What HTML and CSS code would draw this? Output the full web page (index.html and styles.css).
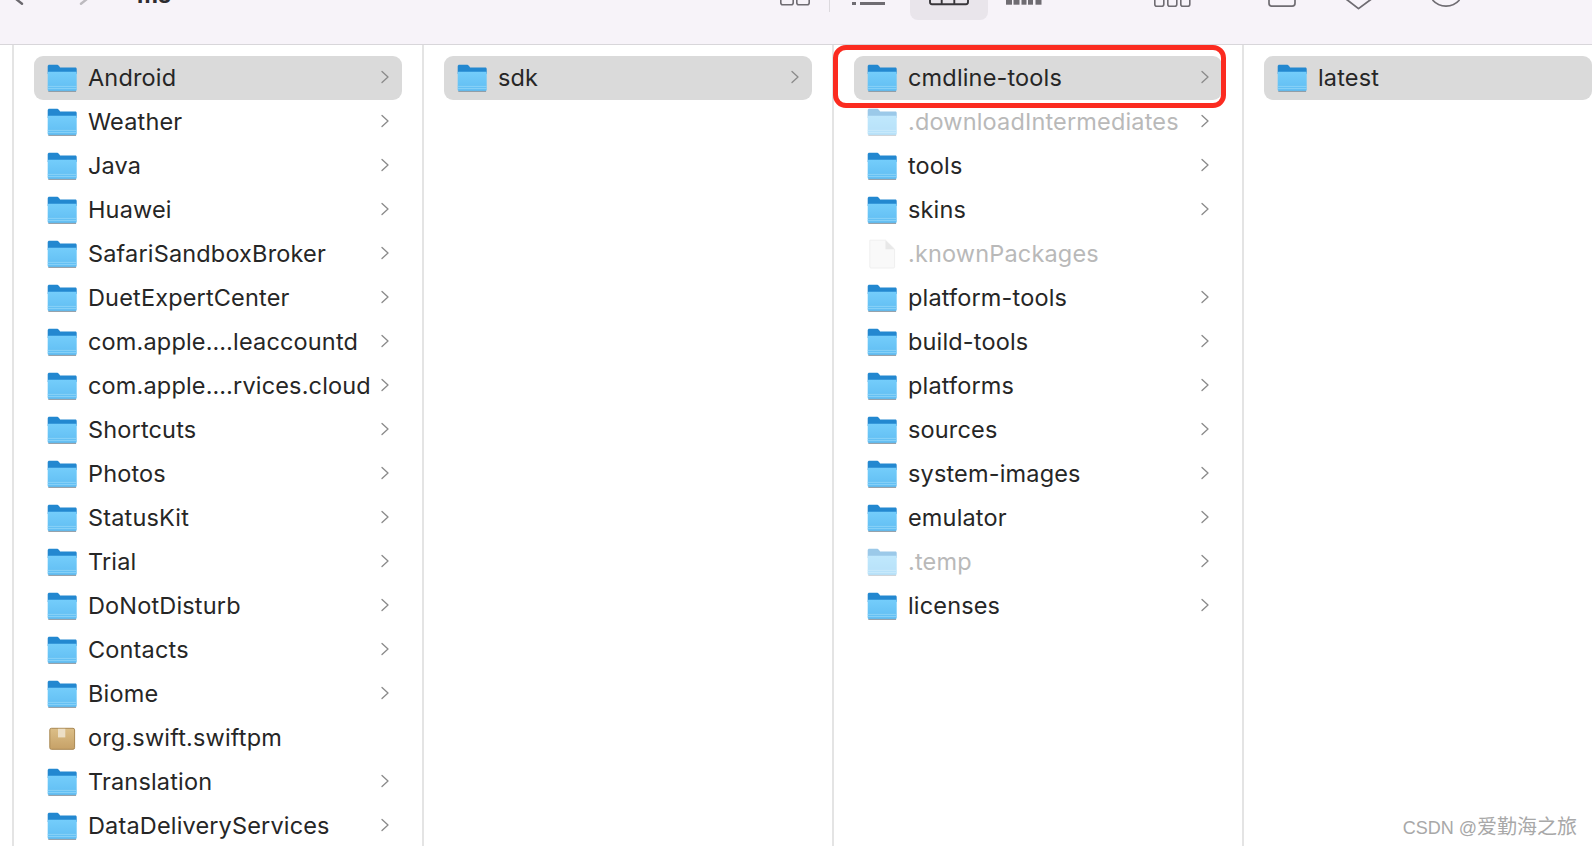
FILE: index.html
```html
<!DOCTYPE html>
<html lang="en">
<head>
<meta charset="utf-8">
<title>Finder</title>
<link rel="stylesheet" href="styles.css">
</head>
<body>
<svg class="defs" width="0" height="0" aria-hidden="true">
  <defs>
    <linearGradient id="fb" x1="0" y1="0" x2="0" y2="1"><stop offset="0" stop-color="#74cdfb"/><stop offset="1" stop-color="#60bdf2"/></linearGradient>
    <linearGradient id="bx" x1="0" y1="0" x2="0" y2="1"><stop offset="0" stop-color="#dcbf88"/><stop offset="1" stop-color="#c6a167"/></linearGradient>
    <symbol id="folder" viewBox="0 0 31 31">
      <path d="M1.7 3.4C1.7 2.4 2.4 1.7 3.4 1.7H10.7C11.7 1.7 12.3 2.1 12.9 2.8L14.1 4.4H29.3C30.3 4.4 30.7 5 30.7 6V11H1.7Z" fill="#2388d0"/>
      <path d="M1.7 10C1.7 9.2 2.3 8.7 3.1 8.7H29.3C30.1 8.7 30.7 9.2 30.7 10V26.6C30.7 27.6 30.1 28.1 29.1 28.1H3.3C2.3 28.1 1.7 27.6 1.7 26.6Z" fill="url(#fb)"/>
      <path d="M1.7 23.4H30.7M1.7 25.6H30.7" stroke="#93d6f8" stroke-width=".8"/>
      <path d="M2.3 28.4H30.1" stroke="#8b98a2" stroke-width="1"/>
    </symbol>
    <symbol id="chev" viewBox="0 0 10 14">
      <path d="M2 1.4L8 7L2 12.6" fill="none" stroke="#8a8a8a" stroke-width="1.3" stroke-linecap="round" stroke-linejoin="round"/>
    </symbol>
    <symbol id="doc" viewBox="0 0 31 31">
      <path d="M3.8 1.2H19.5L28.6 10.2V27.8C28.6 28.5 28.1 29 27.4 29H5C4.3 29 3.8 28.5 3.8 27.8Z" fill="#f9f9f9" stroke="#efefef"/>
      <path d="M19.5 1.2V10.2H28.6Z" fill="#e8e8e8"/>
    </symbol>
    <symbol id="box" viewBox="0 0 31 31">
      <rect x="3.8" y="5.3" width="24.8" height="21" rx="1.6" fill="url(#bx)" stroke="#a98852"/>
      <rect x="12" y="5.8" width="7.3" height="8.6" fill="#ecdfc6"/>
    </symbol>
  </defs>
</svg>
<div class="window">
  <header class="toolbar">
    <svg class="tb nav" width="16" height="8" viewBox="0 0 16 8"><path d="M4 -1L10 3.8" fill="none" stroke="#6b686e" stroke-width="2.4" stroke-linecap="round"/></svg>
    <svg class="tb nav-f" width="16" height="8" viewBox="0 0 16 8"><path d="M10 -1L4 3.8" fill="none" stroke="#bdbabf" stroke-width="2.4" stroke-linecap="round"/></svg>
    <span class="title">ms</span>
    <div class="views">
      <svg class="v1" width="32" height="8" viewBox="0 0 32 8"><g fill="none" stroke="#6f6c72" stroke-width="1.6"><rect x="1.8" y="-8" width="12.4" height="12.8" rx="2"/><rect x="17.8" y="-8" width="12.4" height="12.8" rx="2"/></g></svg>
      <i class="sep"></i>
      <svg class="v2" width="34" height="6" viewBox="0 0 34 6"><path d="M0 3.4H4M8 3.4H33" stroke="#6f6c72" stroke-width="3"/></svg>
      <div class="active"><svg width="40" height="8" viewBox="0 0 40 8"><path d="M1 -4V2C1 3.5 2 4.2 3 4.2H37C38 4.2 39 3.5 39 2V-4M12.7 -4V4M25.3 -4V4" fill="none" stroke="#38363a" stroke-width="1.9"/></svg></div>
      <svg class="v4" width="38" height="8" viewBox="0 0 38 8"><g fill="#6f6c72"><rect x="0" y="0" width="6" height="4.7"/><rect x="7.5" y="0" width="6" height="4.7"/><rect x="15.5" y="0" width="5" height="4.7"/><rect x="22" y="0" width="5" height="4.7"/><rect x="29.5" y="0" width="6" height="4.7"/></g></svg>
    </div>
    <svg class="tb group" width="38" height="10" viewBox="0 0 38 10"><g fill="none" stroke="#6f6c72" stroke-width="1.6"><rect x="1.8" y="-6" width="9" height="12.2" rx="2"/><rect x="14.8" y="-6" width="9" height="12.2" rx="2"/><rect x="27.8" y="-6" width="9" height="12.2" rx="2"/></g></svg>
    <svg class="tb share" width="30" height="10" viewBox="0 0 30 10"><path d="M2 -6V3.2C2 5 3 6.1 4.8 6.1H25.2C27 6.1 28 5 28 3.2V-6" fill="none" stroke="#6f6c72" stroke-width="1.7"/></svg>
    <svg class="tb tag" width="34" height="12" viewBox="0 0 34 12"><path d="M5 -1L17.5 8.6L30.5 -1" fill="none" stroke="#6f6c72" stroke-width="1.8" stroke-linejoin="round"/></svg>
    <svg class="tb more" width="34" height="10" viewBox="0 0 34 10"><path d="M3.5 0A18 18 0 0 0 30.5 0" fill="none" stroke="#6f6c72" stroke-width="1.7"/></svg>
  </header>
  <main class="browser">
    <section class="col">
      <div class="row sel"><svg class="ic"><use href="#folder"/></svg><span class="name">Android</span><svg class="chev"><use href="#chev"/></svg></div>
      <div class="row"><svg class="ic"><use href="#folder"/></svg><span class="name">Weather</span><svg class="chev"><use href="#chev"/></svg></div>
      <div class="row"><svg class="ic"><use href="#folder"/></svg><span class="name">Java</span><svg class="chev"><use href="#chev"/></svg></div>
      <div class="row"><svg class="ic"><use href="#folder"/></svg><span class="name">Huawei</span><svg class="chev"><use href="#chev"/></svg></div>
      <div class="row"><svg class="ic"><use href="#folder"/></svg><span class="name">SafariSandboxBroker</span><svg class="chev"><use href="#chev"/></svg></div>
      <div class="row"><svg class="ic"><use href="#folder"/></svg><span class="name">DuetExpertCenter</span><svg class="chev"><use href="#chev"/></svg></div>
      <div class="row"><svg class="ic"><use href="#folder"/></svg><span class="name">com.apple.…leaccountd</span><svg class="chev"><use href="#chev"/></svg></div>
      <div class="row"><svg class="ic"><use href="#folder"/></svg><span class="name">com.apple.…rvices.cloud</span><svg class="chev"><use href="#chev"/></svg></div>
      <div class="row"><svg class="ic"><use href="#folder"/></svg><span class="name">Shortcuts</span><svg class="chev"><use href="#chev"/></svg></div>
      <div class="row"><svg class="ic"><use href="#folder"/></svg><span class="name">Photos</span><svg class="chev"><use href="#chev"/></svg></div>
      <div class="row"><svg class="ic"><use href="#folder"/></svg><span class="name">StatusKit</span><svg class="chev"><use href="#chev"/></svg></div>
      <div class="row"><svg class="ic"><use href="#folder"/></svg><span class="name">Trial</span><svg class="chev"><use href="#chev"/></svg></div>
      <div class="row"><svg class="ic"><use href="#folder"/></svg><span class="name">DoNotDisturb</span><svg class="chev"><use href="#chev"/></svg></div>
      <div class="row"><svg class="ic"><use href="#folder"/></svg><span class="name">Contacts</span><svg class="chev"><use href="#chev"/></svg></div>
      <div class="row"><svg class="ic"><use href="#folder"/></svg><span class="name">Biome</span><svg class="chev"><use href="#chev"/></svg></div>
      <div class="row"><svg class="ic"><use href="#box"/></svg><span class="name">org.swift.swiftpm</span></div>
      <div class="row"><svg class="ic"><use href="#folder"/></svg><span class="name">Translation</span><svg class="chev"><use href="#chev"/></svg></div>
      <div class="row"><svg class="ic"><use href="#folder"/></svg><span class="name">DataDeliveryServices</span><svg class="chev"><use href="#chev"/></svg></div>
    </section>
    <section class="col">
      <div class="row sel"><svg class="ic"><use href="#folder"/></svg><span class="name">sdk</span><svg class="chev"><use href="#chev"/></svg></div>
    </section>
    <section class="col">
      <div class="row sel"><svg class="ic"><use href="#folder"/></svg><span class="name">cmdline-tools</span><svg class="chev"><use href="#chev"/></svg><div class="callout"></div></div>
      <div class="row dim"><svg class="ic"><use href="#folder"/></svg><span class="name">.downloadIntermediates</span><svg class="chev"><use href="#chev"/></svg></div>
      <div class="row"><svg class="ic"><use href="#folder"/></svg><span class="name">tools</span><svg class="chev"><use href="#chev"/></svg></div>
      <div class="row"><svg class="ic"><use href="#folder"/></svg><span class="name">skins</span><svg class="chev"><use href="#chev"/></svg></div>
      <div class="row dim doc"><svg class="ic"><use href="#doc"/></svg><span class="name">.knownPackages</span></div>
      <div class="row"><svg class="ic"><use href="#folder"/></svg><span class="name">platform-tools</span><svg class="chev"><use href="#chev"/></svg></div>
      <div class="row"><svg class="ic"><use href="#folder"/></svg><span class="name">build-tools</span><svg class="chev"><use href="#chev"/></svg></div>
      <div class="row"><svg class="ic"><use href="#folder"/></svg><span class="name">platforms</span><svg class="chev"><use href="#chev"/></svg></div>
      <div class="row"><svg class="ic"><use href="#folder"/></svg><span class="name">sources</span><svg class="chev"><use href="#chev"/></svg></div>
      <div class="row"><svg class="ic"><use href="#folder"/></svg><span class="name">system-images</span><svg class="chev"><use href="#chev"/></svg></div>
      <div class="row"><svg class="ic"><use href="#folder"/></svg><span class="name">emulator</span><svg class="chev"><use href="#chev"/></svg></div>
      <div class="row dim"><svg class="ic"><use href="#folder"/></svg><span class="name">.temp</span><svg class="chev"><use href="#chev"/></svg></div>
      <div class="row"><svg class="ic"><use href="#folder"/></svg><span class="name">licenses</span><svg class="chev"><use href="#chev"/></svg></div>
    </section>
    <section class="col last">
      <div class="row sel"><svg class="ic"><use href="#folder"/></svg><span class="name">latest</span></div>
    </section>
  </main>
  <div class="mark">CSDN @<span class="mark-cjk">爱勤海之旅</span></div>
</div>
</body>
</html>
```

FILE: styles.css
```css
* { box-sizing: border-box; }
html, body { margin: 0; height: 100%; overflow: hidden; background: #fff; }
.defs { position: absolute; }
.window { position: relative; width: 1592px; height: 846px; font-family: Inter, "Noto Sans", sans-serif; overflow: hidden; }
.toolbar { position: relative; height: 45px; background: #f7f3f9; border-bottom: 1px solid #d8d6da; overflow: hidden; }
.tb, .title, .views { position: absolute; top: 0; }
.nav { left: 12px; }
.nav-f { left: 77px; }
.title { left: 137px; top: -19px; font-size: 23px; line-height: 28px; font-weight: 700; color: #2e2c30; }
.views { left: 779px; display: flex; align-items: flex-start; }
.v1 { margin-right: 18px; }
.sep { width: 1px; height: 12px; background: #dcd9de; margin-right: 22px; }
.v2 { margin-right: 24px; }
.active { width: 78px; height: 20px; background: #e9e5eb; border-radius: 0 0 8px 8px; display: flex; justify-content: center; align-items: flex-start; margin-right: 18px; }
.group { left: 1153px; }
.share { left: 1267px; }
.tag { left: 1341px; }
.more { left: 1429px; }
.browser { display: flex; height: 801px; padding-left: 12px; overflow: hidden; }
.col { flex: none; width: 410px; height: 100%; padding: 11px 20px 0 20px; border-left: 2px solid #e4e4e4; }
.col.last { flex: 1; padding-right: 0; }
.row { position: relative; display: flex; align-items: center; height: 44px; padding-left: 12px; border-radius: 9px; color: #262626; }
.row.sel { background: #dadada; }
.ic { flex: none; width: 31px; height: 31px; margin-right: 11px; }
.name { flex: 1; font-size: 23.5px; line-height: 28px; white-space: nowrap; letter-spacing: .16px; }
.chev { flex: none; width: 10px; height: 14px; margin: 0 12px 2px 0; }
.dim .name { color: #b9b9b9; }
.dim .ic { opacity: .45; }
.dim.doc .ic { opacity: 1; }
.callout { position: absolute; left: -21px; top: -11px; width: 393px; height: 62.5px; border: 5px solid #fb2b20; border-radius: 13px; }
.mark { position: absolute; right: 15px; bottom: 7px; font-family: "Liberation Sans", "Noto Sans CJK SC", sans-serif; font-size: 18px; line-height: 22px; color: #a8a8a8; }
.mark-cjk { font-size: 20px; }
```
